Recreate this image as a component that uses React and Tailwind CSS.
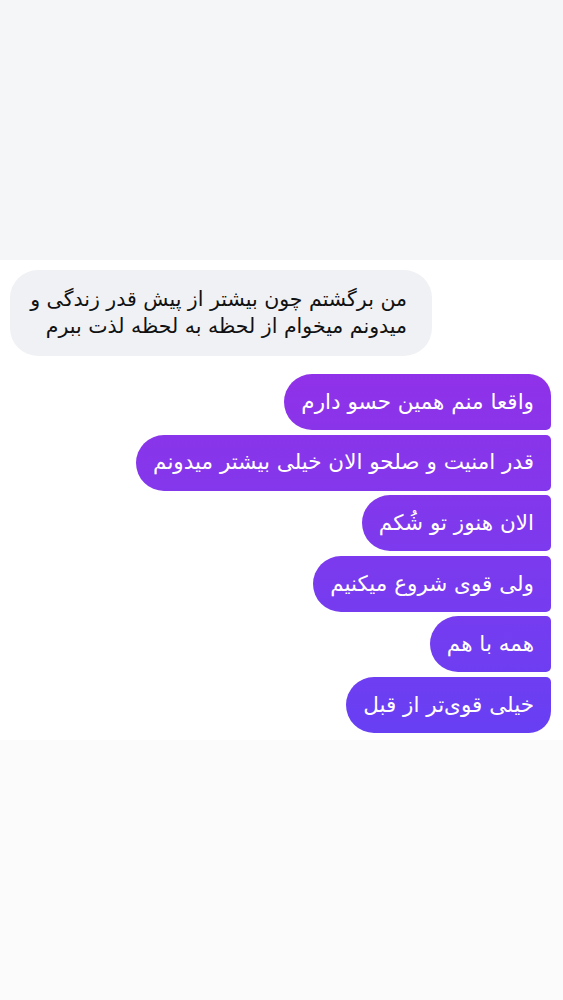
import React from "react";

const sent = [
  "واقعا منم همین حسو دارم",
  "قدر امنیت و صلحو الان خیلی بیشتر میدونم",
  "الان هنوز تو شُکم",
  "ولی قوی شروع میکنیم",
  "همه با هم",
  "خیلی قوی‌تر از قبل",
];

export default function App() {
  return (
    <div className="w-[563px] h-[1000px] flex flex-col bg-[#fbfbfb] font-['DejaVu_Sans',sans-serif]">
      {/* top empty area */}
      <div className="h-[260px] bg-[#f5f6f8]" />

      {/* chat */}
      <div className="bg-white pt-[10px] pb-[7px] flex flex-col">
        <div className="pl-[10px] flex">
          <div
            dir="rtl"
            className="w-[422px] h-[86px] rounded-[28px] bg-[#f0f1f4] px-[25px] flex flex-col justify-center text-[20.5px] leading-[27px] text-[#111]"
          >
            <p className="whitespace-nowrap">من برگشتم چون بیشتر از پیش قدر زندگی و</p>
            <p className="whitespace-nowrap">میدونم میخوام از لحظه به لحظه لذت ببرم</p>
          </div>
        </div>

        <div className="mt-[18px] pr-[12px] flex flex-col items-end gap-[4.6px]">
          {sent.map((t, i) => (
            <div
              key={i}
              dir="rtl"
              className={`h-[56px] flex items-center px-[17px] text-[21.5px] whitespace-nowrap text-white rounded-l-[28px] bg-linear-to-b from-[#9031e8] from-[37%] to-[#683ff3] to-[73%] bg-fixed ${
                i === 0 ? "rounded-tr-[22px]" : "rounded-tr-[5px]"
              } ${i === sent.length - 1 ? "rounded-br-[22px]" : "rounded-br-[5px]"}`}
            >
              {t}
            </div>
          ))}
        </div>
      </div>

      {/* bottom empty area */}
      <div className="flex-1 bg-[#fbfbfb]" />
    </div>
  );
}
